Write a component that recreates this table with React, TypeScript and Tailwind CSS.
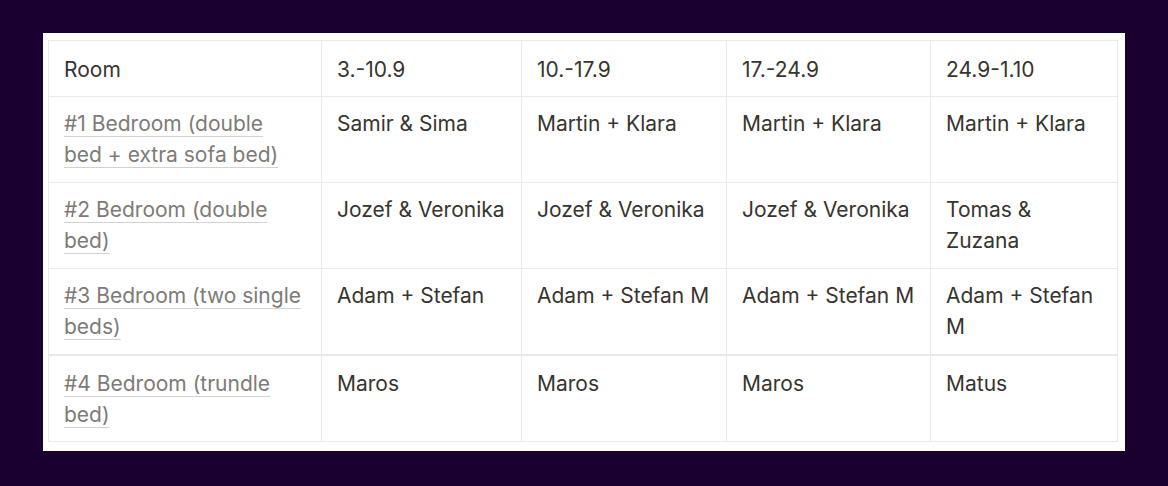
const columns = ['Room', '3.-10.9', '10.-17.9', '17.-24.9', '24.9-1.10'];

const rows = [
  {
    room: '#1 Bedroom (double bed + extra sofa bed)',
    guests: ['Samir & Sima', 'Martin + Klara', 'Martin + Klara', 'Martin + Klara'],
  },
  {
    room: '#2 Bedroom (double bed)',
    guests: ['Jozef & Veronika', 'Jozef & Veronika', 'Jozef & Veronika', 'Tomas & Zuzana'],
  },
  {
    room: '#3 Bedroom (two single beds)',
    guests: ['Adam + Stefan', 'Adam + Stefan M', 'Adam + Stefan M', 'Adam + Stefan M'],
  },
  {
    room: '#4 Bedroom (trundle bed)',
    guests: ['Maros', 'Maros', 'Maros', 'Matus'],
  },
];

const widths = ['w-[273px]', 'w-[200px]', 'w-[205px]', 'w-[204px]', 'w-[187px]'];

export default function App() {
  return (
    <div className="min-h-[486px] bg-[#190030] pt-[33px] pl-[43px]">
      <div
        className="w-[1082px] h-[418px] bg-white pt-[7px] pl-[5px]"
        style={{ fontFamily: 'Inter, "Noto Sans", sans-serif' }}
      >
        <table className="border-collapse table-fixed w-[1069px] text-[21px] leading-[31px] text-[#37352f]">
          <colgroup>
            {widths.map((w, i) => (
              <col key={i} className={w} />
            ))}
          </colgroup>
          <tbody>
            <tr className="h-[56px]">
              {columns.map((c) => (
                <td key={c} className="border border-[#e9e9e7] align-top px-[15px] pt-[13px] pb-[10px]">
                  {c}
                </td>
              ))}
            </tr>
            {rows.map((r, i) => {
              const cell =
                i === 3
                  ? 'border border-[#e9e9e7] border-t-2 align-top px-[15px] pt-[12px] pb-[10px]'
                  : 'border border-[#e9e9e7] align-top px-[15px] pt-[11px] pb-[10px]';
              return (
                <tr key={r.room} className={i === 3 ? 'h-[87px]' : 'h-[86px]'}>
                  <td className={cell}>
                    <span className="text-[#7d7b77] underline decoration-[#d3d2cf] decoration-1 underline-offset-[5px]">
                      {r.room}
                    </span>
                  </td>
                  {r.guests.map((g, j) => (
                    <td key={j} className={cell}>
                      {g}
                    </td>
                  ))}
                </tr>
              );
            })}
          </tbody>
        </table>
      </div>
    </div>
  );
}
